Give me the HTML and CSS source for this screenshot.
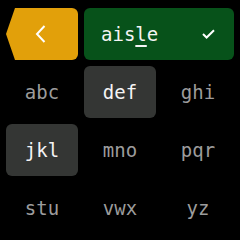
FILE: index.html
```html
<!DOCTYPE html>
<html lang="en">
<head>
    <meta charset="UTF-8">
    <meta name="viewport" content="width=device-width, initial-scale=1.0">
    <title>T9 Input</title>
    <link rel="stylesheet" href="styles.css">
</head>
<body>
    <div class="keypad">
        <button class="key back-key" aria-label="Back">
            <svg width="11" height="18" viewBox="0 0 11 18"><path d="M9.5 1 L2 9 L9.5 17" fill="none" stroke="#fff" stroke-width="2"/></svg>
        </button>
        <button class="key word-key">
            <span class="word">ais<u>l</u>e</span>
            <svg width="13" height="10" viewBox="0 0 13 10"><path d="M1 5 L4.6 8.5 L12 1.2" fill="none" stroke="#fff" stroke-width="2"/></svg>
        </button>
        <button class="key">abc</button>
        <button class="key active">def</button>
        <button class="key">ghi</button>
        <button class="key active">jkl</button>
        <button class="key">mno</button>
        <button class="key">pqr</button>
        <button class="key">stu</button>
        <button class="key">vwx</button>
        <button class="key">yz</button>
    </div>
</body>
</html>
```

FILE: styles.css
```css
body {
    margin: 0;
    background: #000;
    width: 240px;
    height: 240px;
    overflow: hidden;
}
.keypad {
    display: grid;
    grid-template-columns: repeat(3, 72px);
    grid-auto-rows: 52px;
    gap: 6px;
    padding: 8px 6px;
}
.key {
    font-family: "DejaVu Sans Mono", monospace;
    font-size: 19px;
    color: #9c9c9c;
    background: none;
    border: none;
    border-radius: 6px;
    padding: 0;
    display: flex;
    align-items: center;
    justify-content: center;
}
.key.active {
    background: #343634;
    color: #f4f4f4;
}
.back-key {
    background: #e2a00a;
    clip-path: polygon(9px 0, 100% 0, 100% 100%, 9px 100%, 0 50%);
    padding-right: 4px;
}
.word-key {
    grid-column: span 2;
    background: #07521a;
    color: #f4f4f4;
    justify-content: space-between;
    padding: 0 19px 0 17px;
}
.word u {
    text-decoration-thickness: 2px;
    text-underline-offset: 4px;
}
```
